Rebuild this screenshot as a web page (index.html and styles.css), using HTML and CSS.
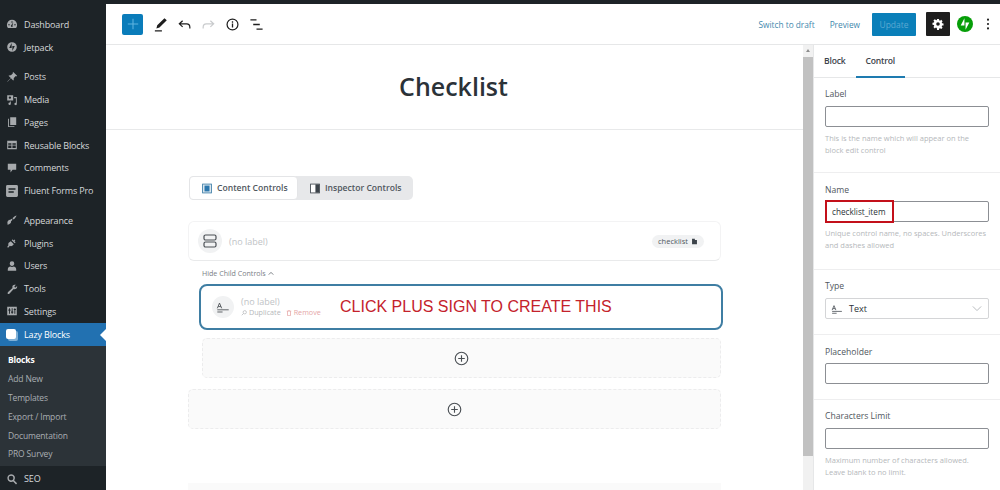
FILE: index.html
```html
<!DOCTYPE html>
<html lang="en">

<head>
    <meta charset="UTF-8">
    <title>Edit Block - Checklist</title>
    <link rel="stylesheet" href="styles.css">
</head>

<body>
    <div class="admin-bar"></div>
    <div class="layout">
        <nav class="sidebar">
            <ul class="menu">
                <li><svg class="menu-icon" viewBox="0 0 20 20"><path d="M10 3a8.500 8.500 0 0 0-8.500 8.500c0 2 .7 3.800 1.800 5.200h13.400a8.500 8.500 0 0 0 1.800-5.200A8.500 8.500 0 0 0 10 3zm0 2.500a1.200 1.200 0 1 1 0 2.400 1.200 1.200 0 0 1 0-2.400zM5 10a1.200 1.200 0 1 1 0 2.400A1.200 1.200 0 0 1 5 10zm10 0a1.200 1.200 0 1 1 0 2.400 1.200 1.200 0 0 1 0-2.400zm-5 5a1.800 1.800 0 0 1-1-3.300l3-4.200-1.200 4.800A1.800 1.800 0 0 1 10 15z"/></svg>Dashboard</li>
                <li class="group-end"><svg class="menu-icon" viewBox="0 0 20 20"><path d="M10 2a8 8 0 1 0 0 16 8 8 0 0 0 0-16zM9.400 11.500H5.300l4.100-8zm1.200 5V8.500h4.100z"/></svg>Jetpack</li>
                <li><svg class="menu-icon" viewBox="0 0 20 20"><path d="M12 1.500l6.500 6.500-1.300 1-1-.5-3.400 3.400c.5 1.500.2 3-.8 4L8.300 12 3 17.500l-1 .5.500-1L8 11.700 4.200 8c1-1 2.500-1.300 4-.8L11.600 3.800l-.5-1z"/></svg>Posts</li>
                <li><svg class="menu-icon" viewBox="0 0 20 20"><path d="M2 2h10v9H2zm4.500 2a2 2 0 1 0 0 4 2 2 0 0 0 0-4zM13.500 5H18v11.500a2 2 0 1 1-1.500-1.900V7h-3zM8 12.500v3.800a2 2 0 1 1-1.500-1.900v-1.900z"/></svg>Media</li>
                <li><svg class="menu-icon" viewBox="0 0 20 20"><path d="M7 2h10v13H7zM5 4.500v12.500h9v1.500H3.500V4.500z"/></svg>Pages</li>
                <li><svg class="menu-icon" viewBox="0 0 20 20"><path d="M2 3h16v14H2zm1.700 4.200v2.300h5.300V7.200zm7 0v2.300h5.600V7.200zm-7 3.700v4.300h5.300v-4.300zm7 0v4.300h5.600v-4.300z"/></svg>Reusable Blocks</li>
                <li><svg class="menu-icon" viewBox="0 0 20 20"><path d="M3 3h14v10h-6l-3.500 4.500V13H3z"/></svg>Comments</li>
                <li class="group-end"><svg class="menu-icon menu-icon-big" viewBox="0 0 20 20"><path fill-rule="evenodd" d="M3.500 1.500h13a2 2 0 0 1 2 2v13a2 2 0 0 1-2 2h-13a2 2 0 0 1-2-2v-13a2 2 0 0 1 2-2zM5 6v2.200h10V6zm0 4.200v2.200h7.500v-2.200z"/></svg>Fluent Forms Pro</li>
                <li><svg class="menu-icon" viewBox="0 0 20 20"><path d="M17.500 2.500c-1 0-4.500 2.300-6.800 4.700l2.100 2.100c2.400-2.300 4.700-5.800 4.700-6.800zM9.500 8l-3 2-1.500-.5L1.500 14l2 .5-2 2.500 3 .5L8 15l.5-3 2.500-2.500z"/></svg>Appearance</li>
                <li><svg class="menu-icon" viewBox="0 0 20 20"><path d="M12.500 2.500L11 4l1.800 1.800 1.500-1.500 1.200 1.200-1.500 1.500L16 8.800l-1.500 1.500-5-5zM8 7l5 5-2.500 2.500c-1.500 1-3 .9-4 .2L3.500 18 2 16.500l2.300-3c-.7-1-.8-2.500.2-4z"/></svg>Plugins</li>
                <li><svg class="menu-icon" viewBox="0 0 20 20"><path d="M10 2a3.800 3.800 0 0 1 3.800 3.800c0 2.300-1.700 4.200-3.800 4.200S6.200 8.100 6.200 5.800A3.800 3.800 0 0 1 10 2zM3 15.500c0-3 2.500-4.500 4-4.500 1.800 1 4.200 1 6 0 1.500 0 4 1.500 4 4.500V18H3z"/></svg>Users</li>
                <li><svg class="menu-icon" viewBox="0 0 20 20"><path d="M16.500 3L14 5.500l.5 1.500 1.500.5L18.500 5c.3 2-.3 3.700-1.700 4.700-1.200.9-2.700 1-4 .5L6 17.500c-1 1-2.500 1-3 .5s-.5-2 .5-3l7.300-6.800c-.5-1.300-.4-2.800.5-4C12.300 3.300 14.500 2.500 16.500 3z"/></svg>Tools</li>
                <li><svg class="menu-icon" viewBox="0 0 20 20"><path fill-rule="evenodd" d="M2 3h16v14H2zm3 2.500v2H4v2h1v5h1.500v-5h1v-2h-1v-2zm4.500 0V11h-1v2h1v1.500H11V13h1v-2h-1V5.500zm4.500 0v1h-1v2h1v6h1.500v-6h1v-2h-1v-1z"/></svg>Settings</li>
                <li class="menu-active"><span class="lazy-icon"></span>Lazy Blocks</li>
            </ul>
            <ul class="submenu">
                <li class="submenu-current">Blocks</li>
                <li>Add New</li>
                <li>Templates</li>
                <li>Export / Import</li>
                <li>Documentation</li>
                <li>PRO Survey</li>
            </ul>
            <ul class="menu menu-bottom">
                <li><svg class="menu-icon" viewBox="0 0 20 20"><path fill-rule="evenodd" d="M8.500 2a6.500 6.500 0 0 1 5.200 10.400l4.800 4.800-1.800 1.800-4.800-4.800A6.500 6.500 0 1 1 8.500 2zm0 2.500a4 4 0 1 0 0 8 4 4 0 0 0 0-8z"/></svg>SEO</li>
            </ul>
        </nav>

        <main class="editor">
            <header class="toolbar">
                <div class="toolbar-left">
                    <button class="add-button">
                        <svg viewBox="0 0 20 20" width="16" height="16"><path d="M10 3.500v13M3.500 10h13" stroke="#5fb4e0" stroke-width="1.300" fill="none"/></svg>
                    </button>
                    <svg class="tool" viewBox="0 0 16 16"><path d="M12.200 1.200l2.500 2.300-7.800 7.700-3.300 1 .9-3.300zM2 14.200h7.500v1.200H2z" fill="#1e1e1e"/></svg>
                    <svg class="tool" viewBox="0 0 16 16"><path d="M6 4L2.500 7.300 6 10.500M2.800 7.300h7.500c2.200 0 3.400 1.400 3.400 3.500v1.400" fill="none" stroke="#1e1e1e" stroke-width="1.300"/></svg>
                    <svg class="tool" viewBox="0 0 16 16"><path d="M10 4l3.500 3.300L10 10.500M13.200 7.300H5.700c-2.200 0-3.400 1.400-3.400 3.500v1.400" fill="none" stroke="#c9cbcd" stroke-width="1.300"/></svg>
                    <svg class="tool" viewBox="0 0 16 16"><circle cx="8" cy="8" r="5.800" fill="none" stroke="#1e1e1e" stroke-width="1.300"/><path d="M8 7v4.200M8 4.600v1.400" stroke="#1e1e1e" stroke-width="1.400"/></svg>
                    <svg class="tool" viewBox="0 0 16 16"><path d="M1.500 3h6.500M4.500 8h7M8 13h6.500" stroke="#1e1e1e" stroke-width="1.400"/></svg>
                </div>
                <div class="toolbar-right">
                    <a class="link-draft">Switch to draft</a>
                    <a class="link-preview">Preview</a>
                    <button class="update-button">Update</button>
                    <button class="settings-button">
                        <svg viewBox="0 0 20 20" width="12" height="12"><path fill="#fff" fill-rule="evenodd" d="M8.400 1.500h3.200l.4 2.400 1.400.6 2-1.400 2.200 2.200-1.400 2 .6 1.400 2.400.4v3.200l-2.400.4-.6 1.400 1.400 2-2.200 2.200-2-1.400-1.400.6-.4 2.400H8.400L8 16.500l-1.400-.6-2 1.400-2.200-2.200 1.400-2-.6-1.400-2.400-.4V8.100l2.400-.4.6-1.400-1.400-2 2.200-2.200 2 1.400L8 3.900zM10 7a3 3 0 1 0 0 6 3 3 0 0 0 0-6z"/></svg>
                    </button>
                    <svg class="jetpack" viewBox="0 0 20 20"><circle cx="10" cy="10" r="10" fill="#069e08"/><path d="M9.300 11.800H4.600L9.300 2.800zM10.700 17.200V8.200h4.700z" fill="#fff"/></svg>
                    <svg class="kebab" viewBox="0 0 4 16"><circle cx="2" cy="3" r="1.200"/><circle cx="2" cy="8" r="1.200"/><circle cx="2" cy="13" r="1.200"/></svg>
                </div>
            </header>

            <div class="workspace">
                <section class="canvas">
                    <div class="title-band">
                        <h1>Checklist</h1>
                    </div>
                    <div class="block-area">
                        <div class="segments">
                            <div class="segment segment-active">
                                <svg viewBox="0 0 12 12" width="10" height="11"><rect x=".7" y=".7" width="10.600" height="10.600" fill="#dbe6ee" stroke="#3b7ca6"/><rect x="3" y="2.500" width="6" height="7" fill="#2b77ad"/></svg>
                                Content Controls
                            </div>
                            <div class="segment">
                                <svg viewBox="0 0 12 12" width="10" height="11"><rect x=".7" y=".7" width="10.600" height="10.600" fill="#fff" stroke="#3c434a"/><rect x="6.500" y="1" width="4.500" height="10" fill="#3c434a"/></svg>
                                Inspector Controls
                            </div>
                        </div>

                        <div class="control-card">
                            <span class="round-icon">
                                <svg viewBox="0 0 16 16" width="16" height="16"><rect x="2" y="2" width="12" height="5" rx="1.500" fill="none" stroke="#4a4f54" stroke-width="1.200"/><rect x="2" y="9" width="12" height="5" rx="1.500" fill="none" stroke="#4a4f54" stroke-width="1.200"/></svg>
                            </span>
                            <span class="no-label">(no label)</span>
                            <span class="chip">checklist
                                <svg viewBox="0 0 10 10" width="7" height="7"><path d="M1.500 1h4v2h3v6h-7z" fill="#3c434a"/></svg>
                            </span>
                        </div>

                        <div class="child-area">
                            <div class="hide-toggle">Hide Child Controls
                                <svg viewBox="0 0 8 6" width="6" height="5"><path d="M1 4.500l3-3 3 3" fill="none" stroke="#50575e" stroke-width="1"/></svg>
                            </div>
                            <div class="child-card">
                                <span class="round-icon round-icon-small">
                                    <svg viewBox="0 0 16 16" width="14" height="14"><path d="M1.500 9.500L4 3.500l2.500 6M2.500 7.500h3" fill="none" stroke="#4a4f54"/><path d="M1.500 11.200h13M1.500 13.700h6" stroke="#4a4f54"/></svg>
                                </span>
                                <div class="child-text">
                                    <div class="no-label">(no label)</div>
                                    <div class="child-actions">
                                        <span class="action">
                                            <svg viewBox="0 0 8 8" width="6" height="6"><circle cx="5" cy="3" r="2.200" fill="none" stroke="#b5b8bb"/><path d="M3.300 4.700L1 7" stroke="#b5b8bb"/></svg>
                                            Duplicate
                                        </span>
                                        <span class="action action-remove">
                                            <svg viewBox="0 0 8 8" width="6" height="6"><path d="M1 1.500h6M2 1.500V7.500h4V1.500M3 .5h2" fill="none" stroke="#e5a6a6"/></svg>
                                            Remove
                                        </span>
                                    </div>
                                </div>
                                <div class="red-note">CLICK PLUS SIGN TO CREATE THIS</div>
                            </div>
                            <div class="add-box add-box-child">
                                <svg viewBox="0 0 16 16" width="15" height="15"><circle cx="8" cy="8" r="6.700" fill="none" stroke="#4a4f54" stroke-width="1.200"/><path d="M8 4.500v7M4.500 8h7" stroke="#4a4f54" stroke-width="1.200"/></svg>
                            </div>
                        </div>

                        <div class="add-box">
                            <svg viewBox="0 0 16 16" width="15" height="15"><circle cx="8" cy="8" r="6.700" fill="none" stroke="#4a4f54" stroke-width="1.200"/><path d="M8 4.500v7M4.500 8h7" stroke="#4a4f54" stroke-width="1.200"/></svg>
                        </div>
                        <div class="next-block"></div>
                    </div>
                </section>

                <div class="scrollbar">
                    <div class="scroll-arrow"></div>
                    <div class="scroll-thumb"></div>
                </div>

                <aside class="panel">
                    <div class="panel-tabs">
                        <span class="panel-tab">Block</span>
                        <span class="panel-tab panel-tab-active">Control</span>
                    </div>
                    <div class="field field-label">
                        <label>Label</label>
                        <div class="input"></div>
                        <p class="help">This is the name which will appear on the block edit control</p>
                    </div>
                    <div class="field field-name">
                        <label>Name</label>
                        <div class="input"><span class="name-value">checklist_item</span></div>
                        <p class="help">Unique control name, no spaces. Underscores and dashes allowed</p>
                    </div>
                    <div class="field field-type">
                        <label>Type</label>
                        <div class="input input-select">
                            <svg viewBox="0 0 16 16" width="12" height="12"><path d="M1.500 9.500L4 3.500l2.500 6M2.500 7.500h3" fill="none" stroke="#3c434a"/><path d="M1.500 11.200h13M1.500 13.700h6" stroke="#3c434a"/></svg>
                            <span>Text</span>
                            <svg class="chevron" viewBox="0 0 12 8" width="10" height="7"><path d="M1 1.500l5 5 5-5" fill="none" stroke="#b9bcbf" stroke-width="1.200"/></svg>
                        </div>
                    </div>
                    <div class="field field-plain">
                        <label>Placeholder</label>
                        <div class="input"></div>
                    </div>
                    <div class="field field-last">
                        <label>Characters Limit</label>
                        <div class="input"></div>
                        <p class="help">Maximum number of characters allowed. Leave blank to no limit.</p>
                    </div>
                </aside>
            </div>
        </main>
    </div>
</body>

</html>
```

FILE: styles.css
```css
* {
    box-sizing: border-box;
}
html, body {
    margin: 0;
    height: 490px;
    overflow: hidden;
}
body {
    background-color: #fff;
    font-family: "Open Sans", sans-serif;
    color: #2c3338;
    font-size: 9px;
}
ul {
    list-style: none;
    margin: 0;
    padding: 0;
}
button {
    border: 0;
    font-family: inherit;
    padding: 0;
}
.admin-bar {
    height: 4px;
    background: #1d2327;
}
.layout {
    display: flex;
    height: 486px;
}

/* left admin menu */
.sidebar {
    width: 106px;
    flex: none;
    background: #1d2327;
    color: #d5d8da;
    padding-top: 9px;
    display: flex;
    flex-direction: column;
    letter-spacing: -.15px;
}
.menu li {
    display: flex;
    align-items: center;
    height: 22.75px;
    padding-left: 6px;
}
.menu li.group-end {
    margin-bottom: 7px;
}
.menu-icon {
    width: 12px;
    height: 12px;
    fill: #a7aaad;
    margin-right: 6px;
    flex: none;
}
.menu-icon-big {
    width: 14px;
    height: 14px;
    margin-left: -1px;
    margin-right: 5px;
}
.menu .menu-active {
    background: #2271b1;
    color: #fff;
    position: relative;
}
.menu-active:after {
    content: "";
    position: absolute;
    right: 0;
    top: 6px;
    border: 6px solid transparent;
    border-right-color: #fff;
    border-left: 0;
}
.lazy-icon {
    width: 10px;
    height: 10px;
    background: #fff;
    border-radius: 2px;
    box-shadow: 2px 2px 0 #7fb0d6;
    margin-right: 8px;
    flex: none;
}
.submenu {
    background: #2c3338;
    color: #a9aeb3;
    padding: 5px 0 3px 8px;
    font-size: 8.5px;
}
.submenu li {
    height: 18.8px;
    display: flex;
    align-items: center;
}
.submenu .submenu-current {
    color: #fff;
    font-weight: 700;
}
.menu-bottom {
    padding-top: 1px;
}

/* top toolbar */
.editor {
    flex: 1;
    min-width: 0;
    display: flex;
    flex-direction: column;
}
.toolbar {
    height: 41px;
    flex: none;
    border-bottom: 1px solid #e6e7e8;
    display: flex;
    justify-content: space-between;
    align-items: center;
    padding: 0 10px 0 16px;
}
.toolbar-left, .toolbar-right {
    display: flex;
    align-items: center;
}
.add-button {
    width: 21px;
    height: 21px;
    background: #0a7cba;
    border-radius: 2px;
    margin-right: 10px;
    display: flex;
    align-items: center;
    justify-content: center;
}
.tool {
    width: 15px;
    height: 15px;
    margin-right: 9px;
}
.link-draft, .link-preview {
    color: #3f88ad;
    font-size: 8.3px;
}
.link-draft {
    margin-right: 15px;
}
.link-preview {
    margin-right: 12px;
}
.update-button {
    width: 44px;
    height: 23px;
    background: #0a7fb9;
    color: #5ba9d2;
    font-size: 8.5px;
    border-radius: 1px;
    margin-right: 10px;
}
.settings-button {
    width: 24px;
    height: 24px;
    background: #1e1e1e;
    border-radius: 1px;
    margin-right: 7px;
    display: flex;
    align-items: center;
    justify-content: center;
}
.jetpack {
    width: 16px;
    height: 16px;
    margin-right: 13px;
}
.kebab {
    width: 4px;
    height: 14px;
    fill: #1e1e1e;
}

/* main row */
.workspace {
    flex: 1;
    display: flex;
    min-height: 0;
}
.canvas {
    width: 697px;
    flex: none;
    overflow: hidden;
}
.title-band {
    height: 85px;
    border-bottom: 1px solid #e8e9ea;
    display: flex;
    align-items: center;
    justify-content: center;
}
.title-band h1 {
    margin: -2px 0 0 -2px;
    font-size: 25px;
    font-weight: 600;
    color: #2b3238;
}
.block-area {
    width: 533px;
    margin-left: 82px;
    padding-top: 46px;
}
.segments {
    display: flex;
    background: #e7e8ea;
    border-radius: 5px;
    width: 224px;
    height: 24px;
    margin-left: 1px;
    align-items: center;
}
.segment {
    display: flex;
    align-items: center;
    gap: 5px;
    padding-left: 12px;
    font-size: 8.6px;
    font-weight: 600;
    color: #50575e;
    white-space: nowrap;
}
.segment-active {
    background: #fff;
    border: 1px solid #e4e5e7;
    border-radius: 4px;
    width: 109px;
    height: 24px;
}
.control-card {
    margin-top: 21px;
    height: 40px;
    border: 1px solid #f3f3f4;
    border-bottom-color: #e9eaeb;
    border-radius: 6px;
    display: flex;
    align-items: center;
    padding: 0 16px 0 9px;
}
.round-icon {
    width: 24px;
    height: 24px;
    border-radius: 50%;
    background: #f1f2f3;
    display: flex;
    align-items: center;
    justify-content: center;
    margin-right: 7px;
    flex: none;
}
.no-label {
    color: #c0c3c6;
    font-size: 9px;
}
.chip {
    margin-left: auto;
    background: #f1f2f3;
    border-radius: 7px;
    height: 13px;
    padding: 0 6px;
    display: flex;
    align-items: center;
    gap: 3px;
    font-size: 7.5px;
    color: #50575e;
}
.child-area {
    padding-left: 14px;
}
.hide-toggle {
    color: #7a8086;
    font-size: 7.1px;
    margin-top: 6px;
    height: 12px;
    display: flex;
    align-items: center;
    gap: 2px;
}
.child-card {
    position: relative;
    margin: 5px -2px 0 -3px;
    height: 46px;
    border: 2px solid #3f7ea3;
    border-radius: 8px;
    display: flex;
    align-items: center;
    padding-left: 11px;
}
.round-icon-small {
    width: 22px;
    height: 22px;
    margin-right: 7px;
}
.child-text {
    line-height: 11px;
    width: 99px;
    flex: none;
}
.child-actions {
    display: flex;
    gap: 5px;
    font-size: 7.2px;
    color: #b5b8bb;
}
.action {
    display: flex;
    align-items: center;
    gap: 2px;
}
.action-remove {
    color: #e5a6a6;
}
.red-note {
    font-family: "Liberation Sans", sans-serif;
    font-size: 16px;
    color: #c4222c;
    white-space: nowrap;
}
.add-box {
    height: 40px;
    margin-top: 11px;
    background: #fafafa;
    border: 1px dashed #ececed;
    border-radius: 5px;
    display: flex;
    align-items: center;
    justify-content: center;
}
.add-box-child {
    margin-top: 8px;
}
.next-block {
    height: 20px;
    margin-top: 54px;
    background: #fafafa;
}

/* scrollbar */
.scrollbar {
    width: 10px;
    flex: none;
    background: #f1f1f1;
}
.scroll-arrow {
    height: 12px;
    position: relative;
}
.scroll-arrow:after {
    content: "";
    position: absolute;
    left: 3px;
    top: 4px;
    border: 2px solid transparent;
    border-top: 0;
    border-bottom: 3px solid #8d8d8d;
}
.scroll-thumb {
    height: 399px;
    background: #c1c1c1;
}

/* right settings panel */
.panel {
    flex: 1;
    border-left: 1px solid #e6e7e8;
    overflow: hidden;
}
.panel-tabs {
    display: flex;
    height: 33px;
    border-bottom: 1px solid #e6e7e8;
}
.panel-tab {
    padding: 0 10px;
    display: flex;
    align-items: center;
    font-weight: 600;
    font-size: 8.6px;
    letter-spacing: -.2px;
    color: #3c434a;
}
.panel-tab-active {
    border-bottom: 2px solid #1e7bb0;
    padding: 1px 10px 0;
    height: 33px;
}
.field {
    padding: 10px 11px 0;
    border-bottom: 1px solid #eeeeef;
}
.field label {
    display: block;
    color: #50575e;
    line-height: 12px;
    margin-bottom: 6px;
    font-size: 8.6px;
}
.field-label {
    height: 95px;
}
.field-name {
    height: 97px;
    padding-top: 11px;
}
.field-type {
    height: 65px;
}
.field-plain {
    height: 65px;
    padding-top: 11px;
}
.field-name label, .field-plain label {
    margin-bottom: 5px;
}
.field-last {
    border-bottom: 0;
}
.input {
    height: 21px;
    border: 1px solid #8c8f94;
    border-radius: 2px;
    display: flex;
    align-items: center;
}
.name-value {
    border: 2px solid #c3101a;
    height: 23px;
    margin: -1px 0 -1px -1px;
    width: 69px;
    display: flex;
    align-items: center;
    padding-left: 5px;
    font-size: 8.2px;
    color: #2c3338;
}
.help {
    margin: 5px 0 0;
    font-size: 7.5px;
    line-height: 12px;
    color: #b5b8bb;
}
.input-select {
    border-color: #d4d5d7;
    padding: 0 6px 0 5px;
    gap: 6px;
}
.chevron {
    margin-left: auto;
}
```
